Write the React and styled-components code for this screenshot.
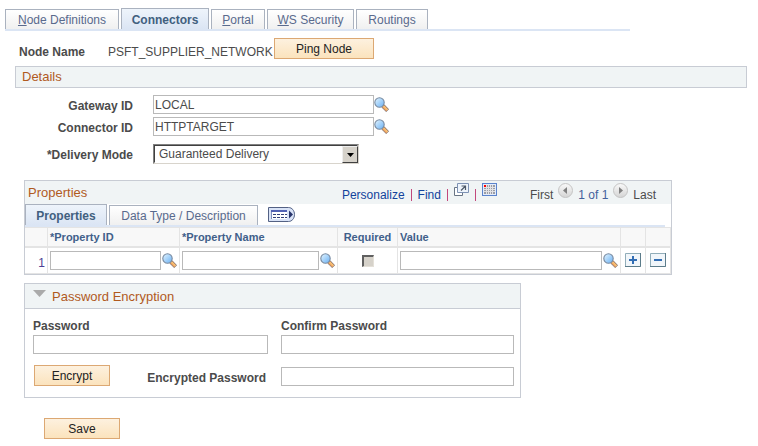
import React from "react";
import styled, { createGlobalStyle, css } from "styled-components";

const Global = createGlobalStyle`
  *, *::before, *::after { box-sizing: border-box; }
  body {
    margin: 0;
    background: #fff;
    color: #4b4b4b;
    font: 12px/14px "Liberation Sans", Arial, sans-serif;
  }
  input, select, button { font: inherit; margin: 0; border-radius: 0; }
`;

const Page = styled.main`
  padding: 8px 11px 7px 5px;
`;

const TabStrip = styled.nav`
  display: grid;
  grid-template-columns: ${(p) => p.$columns};
  gap: 2px;
  align-items: end;
  max-width: ${(p) => p.$width};
  border-bottom: 2px solid #dbe5f4;
`;

const Tab = styled.a`
  height: 20px;
  border: 1px solid #aab2bf;
  border-bottom: 0;
  background: linear-gradient(#fff, #f0f0f0);
  color: #596a8d;
  line-height: 21px;
  text-align: center;
  text-decoration: none;
  white-space: nowrap;
  ${(p) =>
    p.$active &&
    css`
      height: 21px;
      background: linear-gradient(#eef4fb, #dbe5f4);
      color: #41607f;
      font-weight: bold;
      line-height: 22px;
    `}
`;

const NodeRow = styled.div`
  display: flex;
  align-items: center;
  margin: 7px 0;
  padding-left: 14px;
`;

const Label = styled.label`
  font-weight: bold;
  white-space: nowrap;
`;

const NodeLabel = styled.span`
  width: 89px;
  padding-top: 6px;
  font-weight: bold;
`;

const NodeValue = styled.span`
  width: 166px;
  padding-top: 6px;
  white-space: nowrap;
`;

const PushButton = styled.button`
  width: ${(p) => (p.$wide ? "100px" : "76px")};
  height: 21px;
  padding: 0;
  border: 1px solid #dca873;
  background: linear-gradient(#fdf1df, #fbe3bd);
  color: #222;
  line-height: 18px;
`;

const SectionTitle = styled.h2`
  margin: 0;
  color: #b05a1e;
  font-size: 13px;
  font-weight: normal;
  line-height: 20px;
`;

const SectionBar = styled.header`
  margin-left: 10px;
  padding-left: 6px;
  border: 1px solid #c8ccd4;
  background: #f0f4f5;
`;

const DetailForm = styled.div`
  display: grid;
  grid-template-columns: 128px 221px auto;
  grid-template-rows: 19px 19px 30px;
  row-gap: 3px;
  align-items: center;
  margin-top: 7px;

  ${Label} {
    padding: 2px 0 0;
    text-align: right;
  }
`;

const DetailField = styled.div`
  display: grid;
  grid-template-columns: subgrid;
  grid-column: 1 / -1;
  align-items: center;
`;

const TextBox = styled.input`
  width: 100%;
  min-width: 0;
  height: 19px;
  padding: 0 1px;
  border: 1px solid #b9b9b9;
  background: #fff;
  color: #4b4b4b;
  outline: 0;
`;

const SpacedBox = styled.div`
  padding-left: 20px;
  width: 241px;
`;

const SelectFrame = styled.div`
  position: relative;
  width: 206px;
  height: 20px;
  margin-left: 20px;
  border: 1px solid;
  border-color: #808080 #d8d4cc #d8d4cc #808080;
`;

const Select = styled.select`
  display: block;
  appearance: none;
  width: 100%;
  height: 18px;
  padding: 0 20px 0 4px;
  border: 1px solid;
  border-color: #404040 #fff #fff #404040;
  background: #fff;
  color: #4b4b4b;
  outline: 0;
`;

const SelectArrow = styled.span`
  position: absolute;
  top: 1px;
  right: 0;
  display: grid;
  place-items: center;
  width: 16px;
  height: 17px;
  border: 1px solid;
  border-color: #eee #404040 #404040 #eee;
  background: #d6d2ca;
  pointer-events: none;
`;

const IconButton = styled.button`
  display: block;
  flex: none;
  padding: 0;
  border: 0;
  background: none;

  svg { display: block; }
`;

const GridPanel = styled.section`
  max-width: 648px;
  margin: 11px 0 0 19px;
  border: 1px solid #c8ccd4;
`;

const GridHeader = styled.header`
  display: flex;
  justify-content: space-between;
  height: 23px;
  padding: 0 15px 0 3px;
  background: #f0f4f5;

  ${SectionTitle} { line-height: 23px; }
`;

const Tools = styled.div`
  display: flex;
  align-items: flex-start;
  padding-top: 2px;
`;

const ToolGroup = styled.div`
  display: flex;
  align-items: flex-start;
  gap: ${(p) => p.$gap};
  margin-right: ${(p) => p.$after || "0"};
`;

const ToolLink = styled.a`
  margin-top: 5px;
  color: #12439c;
  text-decoration: none;
`;

const ToolText = styled.span`
  margin-top: 5px;
  color: ${(p) => (p.$strong ? "#43619c" : "#4b4b4b")};
`;

const Divider = styled.span`
  width: 1px;
  height: 12px;
  margin-top: 6px;
  background: #c2487c;
`;

const ShowAll = styled.div`
  align-self: center;
  padding-left: 8px;
`;

const Table = styled.table`
  width: 100%;
  table-layout: fixed;
  border-spacing: 0;
  border-collapse: separate;
`;

const HeadCell = styled.th`
  height: 21px;
  padding: 0 2px;
  border: solid #e4e4e4;
  border-width: 1px 1px 2px 0;
  background: #f8f8f8;
  color: #41608a;
  font-size: 11px;
  text-align: ${(p) => (p.$center ? "center" : "left")};
  white-space: nowrap;
`;

const cellPadding = { number: "4px 2px 0", action: "0 4px 2px" };

const Cell = styled.td`
  height: 26px;
  padding: ${(p) => cellPadding[p.$kind] || "0 2px"};
  border: solid #e4e4e4;
  border-width: 0 1px 1px 0;
  color: #4d3f94;
  text-align: right;
`;

const Lookup = styled.div`
  display: flex;
  align-items: center;
  gap: 1px;
`;

const Tick = styled.input`
  display: block;
  appearance: none;
  width: 12px;
  height: 12px;
  margin: 0 auto !important;
  border: solid;
  border-width: 2px 1px 1px 2px;
  border-color: #606060 #e4e0d8 #e4e0d8 #606060;
  background: #d6d2ca;
`;

const EncryptPanel = styled.section`
  max-width: 497px;
  margin: 8px 0 0 19px;
  border: 1px solid #c8ccd4;
`;

const EncryptHeader = styled.header`
  display: flex;
  gap: 6px;
  height: 25px;
  padding-left: 8px;
  border-bottom: 1px solid #c8ccd4;
  background: #f0f4f5;

  ${IconButton} { height: 19px; }
  ${SectionTitle} { line-height: 25px; }
`;

const EncryptBody = styled.div`
  padding: 10px 6px 11px 8px;
`;

const FieldPair = styled.div`
  display: grid;
  grid-template-columns: 235px 1fr;
  column-gap: 13px;
  row-gap: 2px;
  align-items: end;
`;

const EncryptRow = styled(FieldPair)`
  margin-top: 11px;
`;

const EncryptActions = styled.div`
  display: flex;
  align-items: center;
  justify-content: space-between;
  padding: 0 2px 0 1px;

  ${Label} { padding-top: 4px; }
`;

const Footer = styled.footer`
  margin: 20px 0 0 39px;
`;

function Magnifier({ label }) {
  return (
    <IconButton type="button" aria-label={label}>
      <svg width="15" height="15" viewBox="0 0 15 15">
        <defs>
          <linearGradient id="lens" x1="0" y1="0" x2="1" y2="1">
            <stop offset="0" stopColor="#e4f5ff" />
            <stop offset="1" stopColor="#68b0f4" />
          </linearGradient>
        </defs>
        <path d="M9 9l4.6 4.6" stroke="#7d6f70" strokeWidth="4" />
        <path d="M9 9l4.2 4.2" stroke="#f2a763" strokeWidth="2.8" />
        <path d="M9.6 9l4 4" stroke="#ffe08a" strokeWidth="0.8" />
        <circle cx="5.5" cy="5.5" r="4.700" fill="url(#lens)" stroke="#788aa0" strokeWidth="1.1" />
      </svg>
    </IconButton>
  );
}

function PageArrow({ label, next }) {
  return (
    <IconButton type="button" aria-label={label}>
      <svg width="15" height="15" viewBox="0 0 15 15">
        <defs>
          <linearGradient id="disc" x1="0" y1="0" x2="0" y2="1">
            <stop offset="0" stopColor="#fafafa" />
            <stop offset="1" stopColor="#d4d4d4" />
          </linearGradient>
        </defs>
        <circle cx="7.5" cy="7.5" r="7" fill="url(#disc)" stroke="#c4c4c4" />
        <path d={next ? "M6 4l4 3.5L6 11z" : "M9 4L5 7.5 9 11z"} fill="#808080" />
      </svg>
    </IconButton>
  );
}

function PopupIcon() {
  return (
    <svg width="15" height="13" viewBox="0 0 15 13">
      <path d="M0.5 4.5h8v8h-8z" fill="#fff" stroke="#687484" />
      <path d="M3.5 0.5h11v9h-11z" fill="#eef4fb" stroke="#7e92b4" />
      <path d="M7 7.5L11 3.5M7.5 3h4v4" fill="none" stroke="#4e5968" strokeWidth="1.2" />
    </svg>
  );
}

function SheetIcon() {
  return (
    <svg width="15" height="13" viewBox="0 0 15 13" shapeRendering="crispEdges">
      <path d="M0.5 0.5h14v12h-14z" fill="#e3ecfb" stroke="#5b83cc" />
      <path d="M2 2h11v9H2z" fill="#9a9da6" />
      <path
        d="M2 4.5h11M2 6.5h11M2 8.5h11M4.5 2v9M6.5 2v9M8.5 2v9M10.5 2v9"
        stroke="#fff"
        strokeWidth="1"
        opacity="0.7"
      />
      <path d="M2 2h2v2H2z" fill="#f00" />
    </svg>
  );
}

function ShowColumnsIcon() {
  return (
    <svg width="27" height="15" viewBox="0 0 27 15">
      <path d="M0.5 0.5h20c3.5 0 6 3.2 6 7s-2.5 7-6 7h-20z" fill="#d9e3f7" stroke="#536184" />
      <path d="M3 3h16v9H3z" fill="#fff" />
      <path d="M3 3h16v2H3z" fill="#5262b4" />
      <path d="M3.5 5v7" stroke="#8190bd" />
      <path d="M5 7.5h14M5 10.5h14" stroke="#31407a" strokeDasharray="3 1" />
      <path d="M21 3.5l4 4-4 4z" fill="#28356c" />
    </svg>
  );
}

function RowIcon({ plus }) {
  return (
    <svg width="16" height="14" viewBox="0 0 16 14">
      <path d="M0.5 0.5h15v13H0.5z" fill="#f1f6fa" stroke="#91adb9" />
      <path d="M15.5 0v13.5H0" fill="none" stroke="#5c7c8a" />
      <path d={plus ? "M4 7h8M8 3v8" : "M4 7h8"} stroke="#336eb4" strokeWidth="2" />
    </svg>
  );
}

const pageTabs = [
  { key: "N", rest: "ode Definitions" },
  { key: "", rest: "Connectors", active: true },
  { key: "P", rest: "ortal" },
  { key: "W", rest: "S Security" },
  { key: "", rest: "Routings" },
];

const columnWidths = [23, 132, 158, 60, 223, 25, 25];

export default function App() {
  return (
    <>
      <Global />
      <Page>
        <TabStrip $columns="114px 88px 54px 87px 72px" $width="625px" aria-label="Node pages">
          {pageTabs.map((t) => (
            <Tab key={t.rest} href="#" $active={t.active}>
              {t.key && <u>{t.key}</u>}
              {t.rest}
            </Tab>
          ))}
        </TabStrip>

        <NodeRow>
          <NodeLabel>Node Name</NodeLabel>
          <NodeValue>PSFT_SUPPLIER_NETWORK</NodeValue>
          <PushButton type="button" $wide>Ping Node</PushButton>
        </NodeRow>

        <SectionBar>
          <SectionTitle>Details</SectionTitle>
        </SectionBar>

        <DetailForm>
          <DetailField>
            <Label htmlFor="gateway">Gateway ID</Label>
            <SpacedBox>
              <TextBox id="gateway" defaultValue="LOCAL" />
            </SpacedBox>
            <SpacedBox>
              <Magnifier label="Look up Gateway ID" />
            </SpacedBox>
          </DetailField>
          <DetailField>
            <Label htmlFor="connector">Connector ID</Label>
            <SpacedBox>
              <TextBox id="connector" defaultValue="HTTPTARGET" />
            </SpacedBox>
            <SpacedBox>
              <Magnifier label="Look up Connector ID" />
            </SpacedBox>
          </DetailField>
          <DetailField>
            <Label htmlFor="delivery">*Delivery Mode</Label>
            <SelectFrame>
              <Select id="delivery" defaultValue="g">
                <option value="g">Guaranteed Delivery</option>
              </Select>
              <SelectArrow>
                <svg width="7" height="4" viewBox="0 0 7 4">
                  <path d="M0 0h7L3.5 4z" fill="#000" />
                </svg>
              </SelectArrow>
            </SelectFrame>
          </DetailField>
        </DetailForm>

        <GridPanel>
          <GridHeader>
            <SectionTitle>Properties</SectionTitle>
            <Tools>
              <ToolGroup $gap="6px" $after="33px">
                <ToolLink href="#">Personalize</ToolLink>
                <Divider />
                <ToolLink href="#">Find</ToolLink>
                <Divider />
                <IconButton type="button" aria-label="View in new window">
                  <PopupIcon />
                </IconButton>
                <Divider />
                <IconButton type="button" aria-label="Download">
                  <SheetIcon />
                </IconButton>
              </ToolGroup>
              <ToolGroup $gap="5px">
                <ToolText>First</ToolText>
                <PageArrow label="Previous" />
                <ToolText $strong>1 of 1</ToolText>
                <PageArrow label="Next" next />
                <ToolText>Last</ToolText>
              </ToolGroup>
            </Tools>
          </GridHeader>

          <TabStrip $columns="82px 149px auto" $width="640px" aria-label="Property views">
            <Tab href="#" $active>Properties</Tab>
            <Tab href="#">Data Type / Description</Tab>
            <ShowAll>
              <IconButton type="button" aria-label="Show all columns">
                <ShowColumnsIcon />
              </IconButton>
            </ShowAll>
          </TabStrip>

          <Table>
            <colgroup>
              {columnWidths.map((w, i) => (
                <col key={i} width={w} />
              ))}
            </colgroup>
            <thead>
              <tr>
                <HeadCell />
                <HeadCell>*Property ID</HeadCell>
                <HeadCell>*Property Name</HeadCell>
                <HeadCell $center>Required</HeadCell>
                <HeadCell>Value</HeadCell>
                <HeadCell />
                <HeadCell />
              </tr>
            </thead>
            <tbody>
              <tr>
                <Cell $kind="number">1</Cell>
                <Cell>
                  <Lookup>
                    <TextBox aria-label="Property ID" />
                    <Magnifier label="Look up Property ID" />
                  </Lookup>
                </Cell>
                <Cell>
                  <Lookup>
                    <TextBox aria-label="Property Name" />
                    <Magnifier label="Look up Property Name" />
                  </Lookup>
                </Cell>
                <Cell>
                  <Tick type="checkbox" aria-label="Required" disabled />
                </Cell>
                <Cell>
                  <Lookup>
                    <TextBox aria-label="Value" />
                    <Magnifier label="Look up Value" />
                  </Lookup>
                </Cell>
                <Cell $kind="action">
                  <IconButton type="button" aria-label="Add row">
                    <RowIcon plus />
                  </IconButton>
                </Cell>
                <Cell $kind="action">
                  <IconButton type="button" aria-label="Delete row">
                    <RowIcon />
                  </IconButton>
                </Cell>
              </tr>
            </tbody>
          </Table>
        </GridPanel>

        <EncryptPanel>
          <EncryptHeader>
            <IconButton type="button" aria-label="Collapse section">
              <svg width="13" height="7" viewBox="0 0 13 7">
                <path d="M0 0h13L6.5 7z" fill="#aaa" />
              </svg>
            </IconButton>
            <SectionTitle>Password Encryption</SectionTitle>
          </EncryptHeader>
          <EncryptBody>
            <FieldPair>
              <Label htmlFor="pw">Password</Label>
              <Label htmlFor="confirm">Confirm Password</Label>
              <TextBox id="pw" type="password" />
              <TextBox id="confirm" type="password" />
            </FieldPair>
            <EncryptRow>
              <EncryptActions>
                <PushButton type="button">Encrypt</PushButton>
                <Label htmlFor="encrypted">Encrypted Password</Label>
              </EncryptActions>
              <TextBox id="encrypted" />
            </EncryptRow>
          </EncryptBody>
        </EncryptPanel>

        <Footer>
          <PushButton type="button">Save</PushButton>
        </Footer>
      </Page>
    </>
  );
}
